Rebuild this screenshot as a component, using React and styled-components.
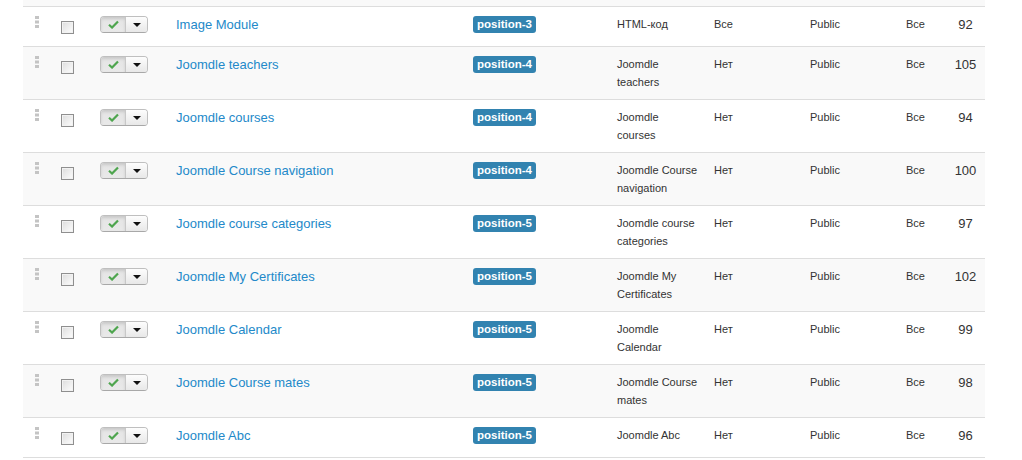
import React from "react"
import styled, { createGlobalStyle } from "styled-components"

const GlobalStyle = createGlobalStyle`
  body {
    margin: 0;
    background: #fff;
    font-family: "Liberation Sans", Arial, sans-serif;
    color: #333;
  }
`

const modules = [
  { title: "Image Module", position: "position-3", type: "HTML-код", pages: "Все", id: 92 },
  { title: "Joomdle teachers", position: "position-4", type: "Joomdle teachers", pages: "Нет", id: 105 },
  { title: "Joomdle courses", position: "position-4", type: "Joomdle courses", pages: "Нет", id: 94 },
  { title: "Joomdle Course navigation", position: "position-4", type: "Joomdle Course navigation", pages: "Нет", id: 100 },
  { title: "Joomdle course categories", position: "position-5", type: "Joomdle course categories", pages: "Нет", id: 97 },
  { title: "Joomdle My Certificates", position: "position-5", type: "Joomdle My Certificates", pages: "Нет", id: 102 },
  { title: "Joomdle Calendar", position: "position-5", type: "Joomdle Calendar", pages: "Нет", id: 99 },
  { title: "Joomdle Course mates", position: "position-5", type: "Joomdle Course mates", pages: "Нет", id: 98 },
  { title: "Joomdle Abc", position: "position-5", type: "Joomdle Abc", pages: "Нет", id: 96 },
]

const widths = [30, 39, 76, 297, 144, 97, 96, 96, 48, 39]

const App = () => (
  <Page>
    <GlobalStyle />
    <Table>
      <colgroup>
        {widths.map((w, i) => (
          <col key={i} style={{ width: w }} />
        ))}
      </colgroup>
      <tbody>
        <SpacerRow>
          <td colSpan={10} />
        </SpacerRow>
        {modules.map((m, i) => (
          <Row key={m.id} $striped={i % 2 === 1}>
            <Cell>
              <Handle viewBox="0 0 4 12" width="4" height="12">
                <rect x="0" y="0" width="4" height="3" fill="#c4c4c4" />
                <rect x="0" y="4.5" width="4" height="3" fill="#c4c4c4" />
                <rect x="0" y="9" width="4" height="3" fill="#c4c4c4" />
              </Handle>
            </Cell>
            <Cell>
              <Check type="checkbox" readOnly />
            </Cell>
            <Cell>
              <BtnGroup>
                <StateBtn>
                  <svg viewBox="0 0 12 10" width="11" height="9">
                    <path d="M1 5.2 L4.4 8.4 L11 1.6" fill="none" stroke="#4ea54e" strokeWidth="2.4" />
                  </svg>
                </StateBtn>
                <CaretBtn>
                  <svg viewBox="0 0 8 4" width="8" height="4">
                    <path d="M0 0 L8 0 L4 4 Z" fill="#111" />
                  </svg>
                </CaretBtn>
              </BtnGroup>
            </Cell>
            <TitleCell>
              <Title href="#">{m.title}</Title>
            </TitleCell>
            <Cell>
              <Badge>{m.position}</Badge>
            </Cell>
            <SmallCell>
              <TypeText>{m.type}</TypeText>
            </SmallCell>
            <SmallCell>{m.pages}</SmallCell>
            <SmallCell>Public</SmallCell>
            <SmallCell>Все</SmallCell>
            <IdCell>{m.id}</IdCell>
          </Row>
        ))}
      </tbody>
    </Table>
  </Page>
)

export default App

const Page = styled.div`
  padding-left: 23px;
  height: 460px;
  overflow: hidden;
`

const Table = styled.table`
  width: 962px;
  border-collapse: collapse;
  table-layout: fixed;
`

const SpacerRow = styled.tr`
  background: #f9f9f9;

  td {
    height: 6px;
    padding: 0;
  }
`

const Row = styled.tr`
  background: ${(p) => (p.$striped ? "#f9f9f9" : "#fff")};
  border-top: 1px solid #dddddd;

  &:last-child {
    border-bottom: 1px solid #dddddd;
  }
`

const Cell = styled.td`
  padding: 8px;
  vertical-align: top;
  font-size: 13px;
  line-height: 18px;
`

const TitleCell = styled(Cell)`
  line-height: 20px;
`

const SmallCell = styled(Cell)`
  font-size: 11px;
  color: #333;
`

const IdCell = styled(Cell)`
  text-align: center;
  padding: 8px 0;
  line-height: 20px;
  color: #333;
`

const TypeText = styled.span`
  display: block;
  width: 81px;
`

const Handle = styled.svg`
  display: block;
  margin: 1px 0 0 4px;
`

const Check = styled.input`
  appearance: none;
  display: block;
  width: 13px;
  height: 13px;
  margin: 6px 0 4px 0;
  box-sizing: border-box;
  border: 1px solid #8f8f8f;
  background: linear-gradient(135deg, #dcdcdc 0%, #f4f4f4 70%, #fbfbfb 100%);
  box-shadow: inset 0 0 0 1px #f2f2f2;
`

const BtnGroup = styled.div`
  display: flex;
  width: 48px;
  height: 17px;
  margin: 1px 0 0 0;
  border: 1px solid #bfbfbf;
  border-bottom-color: #a8a8a8;
  border-radius: 4px;
  box-sizing: border-box;
  overflow: hidden;
`

const StateBtn = styled.span`
  flex: 0 0 24px;
  display: flex;
  align-items: center;
  justify-content: center;
  background: linear-gradient(#e4e4e4, #e9e9e9);
  box-shadow: inset 0 2px 3px rgba(0, 0, 0, 0.12);
  border-right: 1px solid #c8c8c8;
`

const CaretBtn = styled.span`
  flex: 1;
  display: flex;
  align-items: center;
  justify-content: center;
  background: linear-gradient(#fdfdfd, #e8e8e8);
`

const Title = styled.a`
  color: #2389c9;
  text-decoration: none;
`

const Badge = styled.span`
  display: inline-block;
  padding: 2px 4px;
  font-size: 11.5px;
  font-weight: bold;
  line-height: 13px;
  color: #fff;
  background: #3283b0;
  border-radius: 3px;
`
